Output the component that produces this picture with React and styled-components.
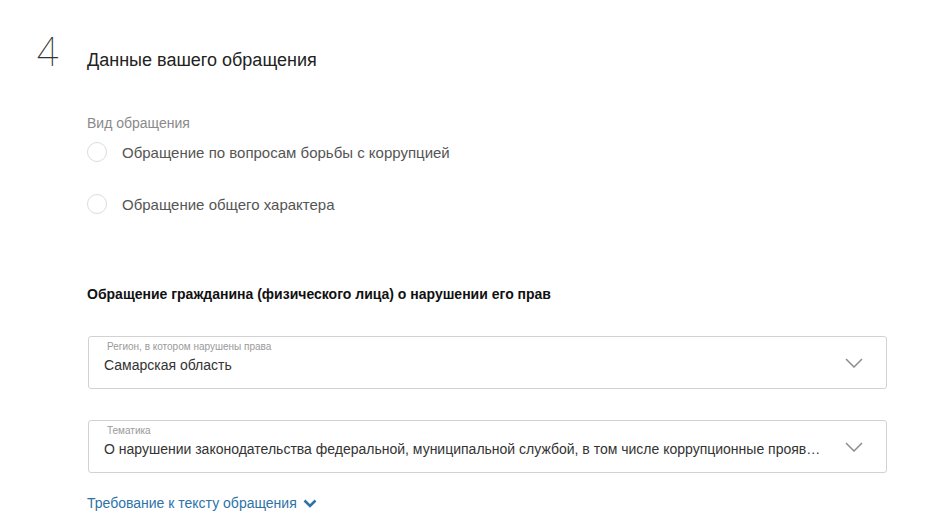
import React from "react";
import styled, { createGlobalStyle } from "styled-components";

const Global = createGlobalStyle`
  html, body { margin: 0; padding: 0; background: #fff; }
  body { font-family: "Liberation Sans", Arial, sans-serif; }
  * { box-sizing: border-box; }
`;

const Page = styled.div`
  width: 928px;
  height: 531px;
  overflow: hidden;
  padding: 30px 41px 0 36px;
  display: grid;
  grid-template-columns: 51px minmax(0, 1fr);
`;

const StepNum = styled.div`
  font-family: Roboto, "Liberation Sans", sans-serif;
  font-weight: 100;
  font-size: 41px;
  line-height: 44px;
  color: #333;
`;

const Content = styled.div`
  display: flex;
  flex-direction: column;
  min-width: 0;
`;

const Heading = styled.h2`
  margin: 19px 0 0;
  font-size: 18px;
  font-weight: 400;
  line-height: 22px;
  color: #222;
`;

const GroupLabel = styled.div`
  margin-top: 43px;
  font-size: 14px;
  line-height: 18px;
  color: #8a8a8a;
`;

const RadioList = styled.div`
  display: flex;
  flex-direction: column;
  gap: 30px;
  margin-top: 9px;
`;

const RadioRow = styled.label`
  display: flex;
  align-items: center;
  gap: 15px;
  height: 22px;
  font-size: 15px;
  color: #555;
`;

const Circle = styled.span`
  width: 20px;
  height: 20px;
  border-radius: 50%;
  border: 1px solid #dcdcdc;
  background: #fff;
  flex: none;
`;

const SubHeading = styled.h3`
  margin: 70px 0 0;
  font-size: 14px;
  font-weight: 700;
  line-height: 18px;
  color: #111;
`;

const Fields = styled.div`
  display: flex;
  flex-direction: column;
  gap: 31px;
  margin-top: 33px;
`;

const Select = styled.div`
  margin-left: 1px;
  height: 53px;
  border: 1px solid #d2d2d2;
  border-radius: 3px;
  display: flex;
  align-items: center;
  padding: 0 23px 0 15px;
  gap: 20px;
`;

const SelectText = styled.div`
  flex: 1;
  min-width: 0;
  display: flex;
  flex-direction: column;
  margin-top: -10px;
`;

const SmallLabel = styled.div`
  font-size: 10px;
  line-height: 11px;
  color: #9a9a9a;
  padding-left: 3px;
`;

const Value = styled.div`
  font-size: 14px;
  line-height: 20px;
  color: #333;
  white-space: nowrap;
  overflow: hidden;
  text-overflow: ellipsis;
  margin-top: 3px;
`;

const Chevron = () => (
  <svg width="18" height="10" viewBox="0 0 18 10" fill="none">
    <path d="M1 1 L9 9 L17 1" stroke="#8c8c8c" strokeWidth="1.5" />
  </svg>
);

const Link = styled.a`
  margin-top: 21px;
  display: flex;
  align-items: center;
  gap: 6px;
  font-size: 14px;
  line-height: 18px;
  color: #2d73a8;
  text-decoration: none;
`;

const LinkChevron = () => (
  <svg width="14" height="9" viewBox="0 0 14 9" fill="none">
    <path d="M1.5 1.5 L7 7 L12.5 1.5" stroke="#2d73a8" strokeWidth="2.6" />
  </svg>
);

export default function App() {
  return (
    <>
      <Global />
      <Page>
        <StepNum>4</StepNum>
        <Content>
          <Heading>Данные вашего обращения</Heading>
          <GroupLabel>Вид обращения</GroupLabel>
          <RadioList>
            <RadioRow>
              <Circle />
              Обращение по вопросам борьбы с коррупцией
            </RadioRow>
            <RadioRow>
              <Circle />
              Обращение общего характера
            </RadioRow>
          </RadioList>
          <SubHeading>Обращение гражданина (физического лица) о нарушении его прав</SubHeading>
          <Fields>
            <Select>
              <SelectText>
                <SmallLabel>Регион, в котором нарушены права</SmallLabel>
                <Value>Самарская область</Value>
              </SelectText>
              <Chevron />
            </Select>
            <Select>
              <SelectText>
                <SmallLabel>Тематика</SmallLabel>
                <Value>
                  О нарушении законодательства федеральной, муниципальной службой, в том числе коррупционные прояв…
                </Value>
              </SelectText>
              <Chevron />
            </Select>
          </Fields>
          <Link href="#">
            Требование к тексту обращения <LinkChevron />
          </Link>
        </Content>
      </Page>
    </>
  );
}
